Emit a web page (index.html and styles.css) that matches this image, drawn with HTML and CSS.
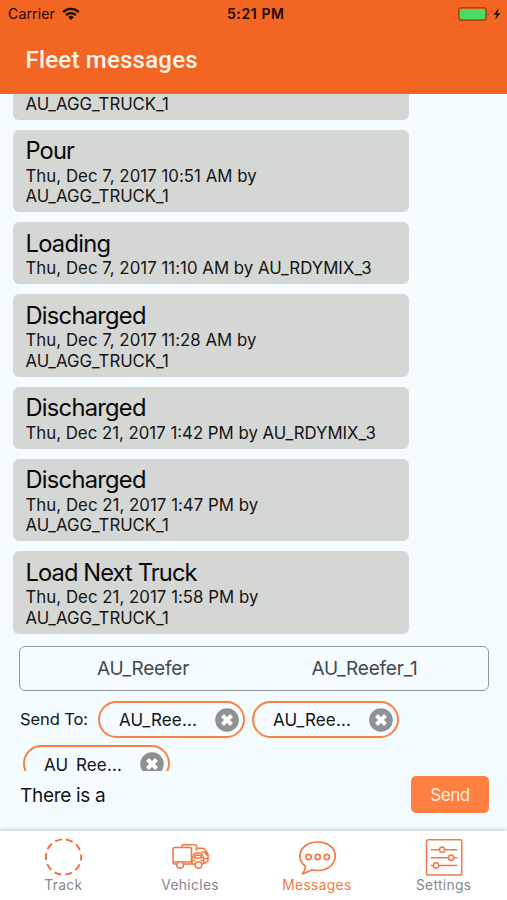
FILE: index.html
```
<!DOCTYPE html>
<html lang="en">
<head>
<meta charset="utf-8">
<title>Fleet messages</title>
<link rel="stylesheet" href="styles.css">
</head>
<body>
<div class="app">
  <header class="header">
    <div class="status">
      <div class="carrier"><span>Carrier</span>
        <svg width="18" height="14" viewBox="0 0 18 14" fill="none" stroke="#210b02" stroke-width="2.3"><path d="M1.2 5.1a11.2 11.2 0 0 1 15.6 0M4.1 8.1a7 7 0 0 1 9.8 0"/><path d="M6.2 10.2a4 4 0 0 1 5.6 0L9 13z" fill="#210b02" stroke="none"/></svg>
      </div>
      <div class="time">5:21 PM</div>
      <svg class="battery" width="44" height="14" viewBox="0 0 44 14"><rect x=".7" y=".7" width="27.6" height="12.6" rx="2.5" fill="none" stroke="#a84612" stroke-width="1.4"/><rect x="2" y="2" width="25" height="10" rx="1" fill="#4cd964"/><path d="M29.8 4.8q2 2.2 0 4.4z" fill="#a84612"/><path d="M40.8 1.3 35.4 7.8h3.2l-1.5 5 5.4-6.5h-3.2z" fill="#210b02"/></svg>
    </div>
    <h1>Fleet messages</h1>
  </header>
  <main class="messages">
    <article class="card partial"><p class="unit">AU_AGG_TRUCK_1</p></article>
    <article class="card"><h2>Pour</h2><p>Thu, Dec 7, 2017 10:51 AM by</p><p class="unit">AU_AGG_TRUCK_1</p></article>
    <article class="card"><h2 class="medium">Loading</h2><p>Thu, Dec 7, 2017 11:10 AM by AU_RDYMIX_3</p></article>
    <article class="card"><h2 class="medium">Discharged</h2><p>Thu, Dec 7, 2017 11:28 AM by</p><p class="unit">AU_AGG_TRUCK_1</p></article>
    <article class="card"><h2 class="medium">Discharged</h2><p class="wide">Thu, Dec 21, 2017 1:42 PM by AU_RDYMIX_3</p></article>
    <article class="card"><h2 class="medium">Discharged</h2><p>Thu, Dec 21, 2017 1:47 PM by</p><p class="unit">AU_AGG_TRUCK_1</p></article>
    <article class="card"><h2>Load Next Truck</h2><p>Thu, Dec 21, 2017 1:58 PM by</p><p class="unit">AU_AGG_TRUCK_1</p></article>
  </main>
  <section class="compose">
    <div class="suggest"><span class="s-one">AU_Reefer</span><span class="s-two">AU_Reefer_1</span></div>
    <div class="recipients">
      <span class="sendto">Send To:</span>
      <span class="chip"><span>AU_Ree...</span><svg width="24" height="24" viewBox="0 0 24 24"><circle cx="12" cy="12" r="11.8" fill="#8e9092"/><path d="m7.500 7.500 9 9m0-9-9 9" stroke="#fff" stroke-width="4"/></svg></span>
      <span class="chip"><span>AU_Ree...</span><svg width="24" height="24" viewBox="0 0 24 24"><circle cx="12" cy="12" r="11.8" fill="#8e9092"/><path d="m7.500 7.500 9 9m0-9-9 9" stroke="#fff" stroke-width="4"/></svg></span>
      <span class="chip wrapped"><span>AU_Ree...</span><svg width="24" height="24" viewBox="0 0 24 24"><circle cx="12" cy="12" r="11.8" fill="#8e9092"/><path d="m7.500 7.500 9 9m0-9-9 9" stroke="#fff" stroke-width="4"/></svg></span>
    </div>
    <div class="entry"><span class="draft">There is a</span><button class="send">Send</button></div>
  </section>
  <nav class="tabs">
    <div class="tab"><svg width="40" height="40" viewBox="0 0 40 40" fill="none" stroke="#f16b32" stroke-width="1.9"><circle cx="20.500" cy="20" r="17.700" stroke-dasharray="7 4.121" stroke-dashoffset="3.500"/></svg><span>Track</span></div>
    <div class="tab"><svg width="40" height="40" viewBox="0 0 40 40" fill="none" stroke="#f27a45" stroke-width="1.6" stroke-linejoin="round"><path d="M12 10V8.500q0-.8.800-.8H25.500q1 0 1 1V14M6.500 27H4.500q-1.500 0-1.500-1.500V12q0-1.500 1.500-1.500h15.500q1.500 0 1.500 1.500v14.500M3 25h18.500M13.500 27H25M22 26.500v-5l2-4q.8-1.500 2.500-1.500h3q1.700 0 2.500 1.500l1.800 4v5h-2M24.500 21l1.200-2.700h4.600l1.200 2.700zM26.500 11.300h6.500q1.500 0 2.200 1.500l2.800 4.700v6l-4 3.500M31.500 15h3.500l1.600 3.500M22.500 23.500h3M30.500 23.500h3M34.500 21.500h3"/><circle cx="10.200" cy="28" r="3.300" fill="#fff"/><circle cx="28.500" cy="28" r="3.300" fill="#fff"/></svg><span>Vehicles</span></div>
    <div class="tab active"><svg width="40" height="40" viewBox="0 0 40 40" fill="none" stroke="#f27a45" stroke-width="1.7" stroke-linejoin="round"><path d="M8.500 29.300C4.500 26.500 2.900 23 2.900 19.100 2.900 10.900 10.500 5 20.700 5s17.500 6 17.500 14.100-7.300 14.400-17.500 14.400q-2.800 0-5.500-.7Q10 35.500 5.300 37 8.500 33 8.500 29.300z"/><circle cx="11.600" cy="20" r="2.600"/><circle cx="20.700" cy="20" r="2.600"/><circle cx="29.800" cy="20" r="2.600"/></svg><span>Messages</span></div>
    <div class="tab"><svg width="40" height="40" viewBox="0 0 40 40" fill="none" stroke="#f27a45" stroke-width="1.500"><rect x="2.500" y="2.700" width="35.300" height="35.300" rx="1.800"/><path d="M6.800 12.700h8.700m5.300 0h12.500M6.800 20.700h17.700m5.300 0h3.500M6.800 28.400h2.700m5.300 0h18.500"/><circle cx="18.100" cy="12.700" r="2.600"/><circle cx="27.100" cy="20.700" r="2.600"/><circle cx="12.100" cy="28.400" r="2.600"/></svg><span>Settings</span></div>
  </nav>
</div>
</body>
</html>
```
FILE: styles.css
```
* { box-sizing: border-box; }
body { margin: 0; font-family: Inter, "Liberation Sans", sans-serif; color: #121415; background: #f5fcff; }
h1, h2, p { margin: 0; font-weight: 400; }
svg { display: block; flex: none; }
.app { width: 507px; height: 900px; display: flex; flex-direction: column; overflow: hidden; background: #f5fcff; }

.header { height: 94px; flex: none; background: #f26522; }
.status { height: 27px; padding: 0 5px 0 8px; display: grid; grid-template-columns: 1fr auto 1fr; align-items: center; font-size: 14px; letter-spacing: .15px; color: #210b02; }
.carrier { display: flex; align-items: center; gap: 7px; }
.time { padding-left: 1.500px; font-weight: 600; letter-spacing: .6px; }
.battery { justify-self: end; }
.header h1 { padding: 17px 0 0 25.500px; font: 500 24px/32px Roboto, sans-serif; letter-spacing: .22px; color: #fff4ec; }

.messages { height: 540px; flex: none; padding-left: 13px; display: flex; flex-direction: column; gap: 10.050px; overflow: hidden; }
.card { width: 396px; flex: none; padding: 6.600px 12.500px 5.400px; border-radius: 6px; background: #d5d7d4; white-space: nowrap; }
.card h2 { height: 29.500px; font-size: 23.700px; line-height: 30.500px; letter-spacing: -.9px; color: #080808; }
.card h2.medium { letter-spacing: -.74px; }
.card p { font-size: 16.800px; line-height: 20.500px; letter-spacing: .04px; }
.card .wide { letter-spacing: 0; }
.card .unit { letter-spacing: -.03px; }
.partial { padding: 0 12.500px 5.100px; border-radius: 0 0 6px 6px; }

.compose { height: 197px; flex: none; }
.suggest { height: 45px; margin: 12px 18px 0 19px; border: 1.500px solid #92979a; border-radius: 6px; display: grid; grid-template-columns: 248px 1fr; align-items: center; justify-items: center; font-size: 19px; line-height: 24px; letter-spacing: -.2px; color: #43484b; }
.suggest span { padding-top: 1px; }
.suggest .s-one { margin-right: 2px; }
.suggest .s-two { margin-right: 27px; }
.recipients { height: 80px; padding: 10px 100px 0 20px; display: flex; flex-wrap: wrap; align-content: flex-start; gap: 7px; overflow: hidden; }
.sendto { width: 71px; line-height: 37px; font-size: 16.500px; letter-spacing: -.1px; white-space: nowrap; }
.chip { width: 147px; height: 37px; padding: 0 4px 0 19px; border: 2.500px solid #fb8043; border-radius: 19px; display: flex; align-items: center; justify-content: space-between; font-size: 17px; letter-spacing: .15px; }
.wrapped { margin-left: 3px; }
.wrapped span { padding-top: 2px; }
.entry { height: 60px; padding: 5px 18px 0 20px; display: flex; justify-content: space-between; }
.draft { font-size: 19px; line-height: 39px; letter-spacing: -.3px; }
.send { width: 78px; height: 37px; padding: 0; border: 0; border-radius: 5px; background: #ff8040; color: #fff0e4; font: 400 17px Inter, sans-serif; letter-spacing: -.4px; }

.tabs { height: 69px; flex: none; display: grid; grid-template-columns: repeat(4, 1fr); background: #fff; box-shadow: 0 -1px 5px rgba(0, 0, 0, .22); }
.tab { display: flex; flex-direction: column; align-items: center; padding-top: 6px; font-size: 13.800px; line-height: 17px; letter-spacing: .33px; color: #85878a; }
.active { color: #f27a45; }
```
